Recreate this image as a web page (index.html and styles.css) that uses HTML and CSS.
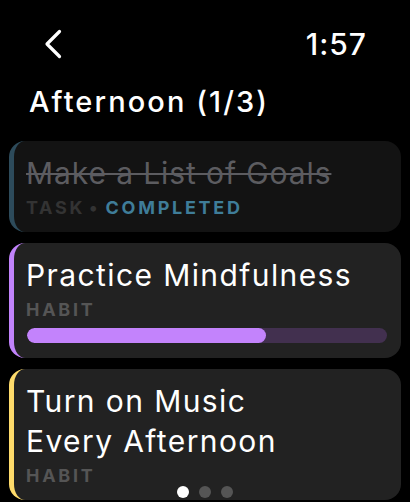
FILE: index.html
```html
<!DOCTYPE html>
<html lang="en">
<head>
  <meta charset="UTF-8">
  <meta name="viewport" content="width=device-width, initial-scale=1.0">
  <title>Afternoon</title>
  <link rel="stylesheet" href="styles.css">
</head>
<body>
  <header class="top-bar">
    <svg class="back" width="18" height="30" viewBox="0 0 18 30">
      <path d="M15.5 2.5 L3 15 L15.5 27.5" fill="none" stroke="#fff" stroke-width="3.2" stroke-linecap="round" stroke-linejoin="round"/>
    </svg>
    <span class="time">1:57</span>
  </header>

  <h1 class="section-title">Afternoon (1/3)</h1>

  <div class="list">
    <div class="card card-done">
      <div class="card-title">Make a List of Goals</div>
      <div class="card-meta">
        <span class="kind">TASK</span>
        <span class="sep">•</span>
        <span class="status">COMPLETED</span>
      </div>
    </div>

    <div class="card card-purple">
      <div class="card-title">Practice Mindfulness</div>
      <div class="card-meta"><span class="kind">HABIT</span></div>
      <div class="progress">
        <div class="progress-fill" style="width: 66.5%"></div>
      </div>
    </div>

    <div class="card card-yellow">
      <div class="card-title">Turn on Music<br>Every Afternoon</div>
      <div class="card-meta"><span class="kind">HABIT</span></div>
    </div>
  </div>

  <div class="pager">
    <span class="dot active"></span>
    <span class="dot"></span>
    <span class="dot"></span>
  </div>
</body>
</html>
```

FILE: styles.css
```css
/* Styles globaux */
body {
  margin: 0;
  padding: 0;
  background-color: #000;
  color: #fff;
  font-family: Inter, "Noto Sans", sans-serif;
  height: 502px;
  overflow: hidden;
}

.top-bar {
  display: flex;
  align-items: center;
  justify-content: space-between;
  height: 36px;
  padding: 26px 44px 0 44px;
}

.back {
  display: block;
}

.time {
  font-size: 30px;
  line-height: 36px;
  font-weight: 500;
  letter-spacing: 1px;
  margin-right: -1px;
}

.section-title {
  margin: 23px 0 0 29px;
  font-size: 29px;
  line-height: 34px;
  font-weight: 500;
  letter-spacing: 2.1px;
}

.list {
  display: flex;
  flex-direction: column;
  gap: 11px;
  padding: 0 9px;
  margin-top: 22px;
}

.card {
  background-color: #222;
  border-radius: 16px;
  border-left: 5px solid #222;
  padding: 12px 14px 13px 12px;
}

.card-title {
  font-size: 30px;
  line-height: 40px;
  font-weight: 400;
  letter-spacing: 1.4px;
}

.card-meta {
  margin-top: 4px;
  font-size: 18px;
  line-height: 22px;
  font-weight: 700;
  letter-spacing: 2.7px;
  color: #555;
}

.card-done {
  background-color: #131313;
  border-left-color: #2d4b5b;
}

.card-done .card-title {
  color: #5c5c60;
  letter-spacing: 0.9px;
  text-decoration: line-through;
  text-decoration-thickness: 2px;
}

.card-done .kind,
.card-done .sep {
  color: #333;
}

.card-done .sep {
  letter-spacing: 0;
  margin: 0 1px 0 -3px;
}

.card-done .status {
  color: #3f7d99;
}

.card-purple {
  border-left-color: #c183fb;
  padding-bottom: 15px;
}

.card-yellow {
  border-left-color: #fedb6b;
}

.progress {
  margin: 7px 0 0 1px;
  height: 15px;
  border-radius: 8px;
  background-color: #42304f;
  overflow: hidden;
}

.progress-fill {
  height: 100%;
  border-radius: 8px;
  background-color: #c383fc;
}

.pager {
  position: fixed;
  left: 0;
  right: 0;
  bottom: 4px;
  display: flex;
  justify-content: center;
  gap: 10px;
}

.dot {
  width: 12px;
  height: 12px;
  border-radius: 50%;
  background-color: #555;
}

.dot.active {
  background-color: #fff;
}
```
